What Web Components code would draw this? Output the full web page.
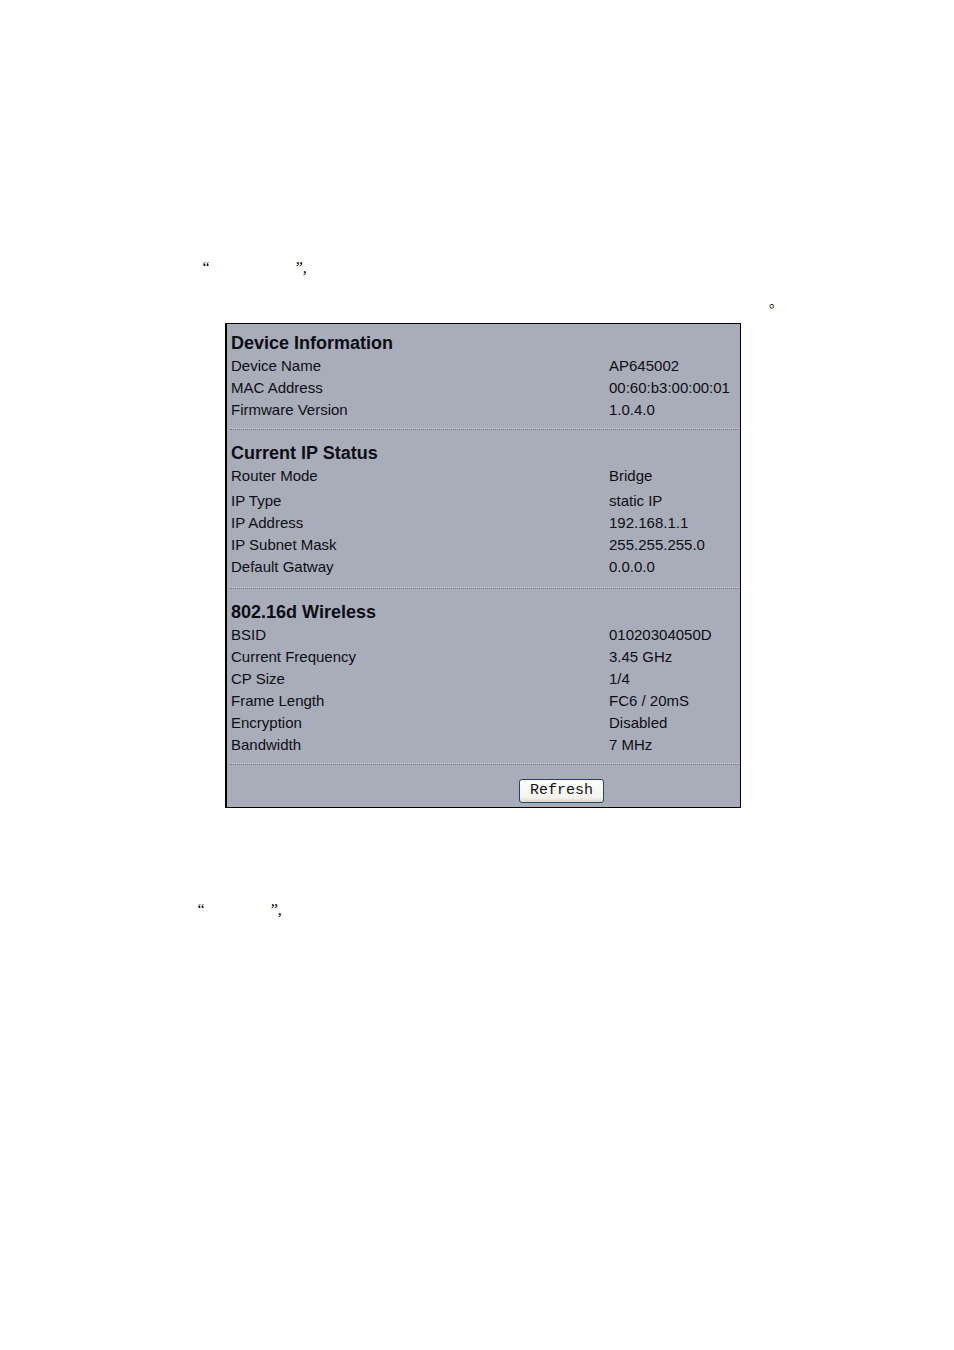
<!DOCTYPE html>
<html lang="en">
<head>
<meta charset="utf-8">
<meta name="viewport" content="width=device-width, initial-scale=1">
<title>Device Information</title>
<style>
  body {
    margin: 0;
    background: #fff;
    color: #000;
    font-family: "Liberation Sans", Arial, sans-serif;
  }
  main {
    padding: 256px 213px 0 225px;
  }
  .first { --gap: 84px; margin-left: -24px; }
  .second { --gap: 64px; margin: 90px 0 0 -29px; }
</style>
</head>
<body>
<main>
  <quote-line class="first"></quote-line>
  <full-stop></full-stop>
  <status-panel>
    <info-section heading="Device Information">
      <info-row label="Device Name">AP645002</info-row>
      <info-row label="MAC Address">00:60:b3:00:00:01</info-row>
      <info-row label="Firmware Version">1.0.4.0</info-row>
    </info-section>
    <info-section heading="Current IP Status" class="roomy">
      <info-row label="Router Mode" class="apart">Bridge</info-row>
      <info-row label="IP Type">static IP</info-row>
      <info-row label="IP Address">192.168.1.1</info-row>
      <info-row label="IP Subnet Mask">255.255.255.0</info-row>
      <info-row label="Default Gatway">0.0.0.0</info-row>
    </info-section>
    <info-section heading="802.16d Wireless">
      <info-row label="BSID">01020304050D</info-row>
      <info-row label="Current Frequency">3.45 GHz</info-row>
      <info-row label="CP Size">1/4</info-row>
      <info-row label="Frame Length">FC6 / 20mS</info-row>
      <info-row label="Encryption">Disabled</info-row>
      <info-row label="Bandwidth">7 MHz</info-row>
    </info-section>
    <refresh-button slot="action">Refresh</refresh-button>
  </status-panel>
  <quote-line class="second"></quote-line>
</main>

<script>
class QuoteLine extends HTMLElement {
  constructor() {
    super();
    this.attachShadow({ mode: "open" });
    this.shadowRoot.innerHTML = `
    <style>
    :host {
      display: flex;
      gap: var(--gap);
      font: italic 16px/24px "Liberation Serif", "Times New Roman", serif;
    }
    </style>
    <span>“</span>
    <span>”,</span>
    `;
  }
}
customElements.define("quote-line", QuoteLine);

class FullStop extends HTMLElement {
  constructor() {
    super();
    this.attachShadow({ mode: "open" });
    this.shadowRoot.innerHTML = `
    <style>
    :host {
      display: block;
      margin: 11px -42px 8px 0;
      text-align: right;
      font: 14px/24px "Liberation Serif", "Noto Sans CJK SC", serif;
    }
    </style>
    <span lang="zh-CN">。</span>
    `;
  }
}
customElements.define("full-stop", FullStop);

class StatusPanel extends HTMLElement {
  constructor() {
    super();
    this.attachShadow({ mode: "open" });
    this.shadowRoot.innerHTML = `
    <style>
    :host {
      display: block;
      --value-width: 131px;
      padding: 7px 0 4px 3px;
      border: 1px solid #000;
      border-left-width: 2px;
      background: #a9adba;
      color: #0c0d14;
    }
    footer {
      display: grid;
      grid-template-columns: 1fr var(--value-width);
      justify-items: end;
      padding-top: 3px;
    }
    </style>
    <slot></slot>
    <footer><slot name="action"></slot></footer>
    `;
  }
}
customElements.define("status-panel", StatusPanel);

// one label and its value, laid out by the section's table
class InfoRow extends HTMLElement {
  constructor() {
    super();
    this.attachShadow({ mode: "open" });
    this.shadowRoot.innerHTML = `
    <style>
    :host { display: block; }
    </style>
    <slot></slot>
    `;
  }
}
customElements.define("info-row", InfoRow);

class InfoSection extends HTMLElement {
  constructor() {
    super();
    this.attachShadow({ mode: "open" });
    this.shadowRoot.innerHTML = `
    <style>
    :host {
      display: block;
      padding-bottom: 8px;
      border-bottom: 1px dotted #6c6f7c;
      box-shadow: inset 0 -1px #bcbfca;
      margin-bottom: 11px;
    }
    :host(.roomy) { padding-bottom: 10px; }
    h2 {
      margin: 0;
      padding-left: 1px;
      font-size: 18px;
      line-height: 24px;
    }
    table {
      width: 100%;
      table-layout: fixed;
      border-collapse: collapse;
      font-size: 15px;
      line-height: 22px;
    }
    th, td {
      padding: 0;
      text-align: left;
      font-weight: normal;
      white-space: nowrap;
    }
    th { padding-left: 1px; }
    td { width: var(--value-width); }
    .apart > * { padding-bottom: 3px; }
    </style>
    <h2 id="heading"></h2>
    <table aria-labelledby="heading"><tbody></tbody></table>
    `;
  }
  connectedCallback() {
    this.shadowRoot.querySelector("h2").textContent = this.getAttribute("heading");
    const body = this.shadowRoot.querySelector("tbody");
    body.innerHTML = "";
    this.querySelectorAll("info-row").forEach((row, i) => {
      const tr = document.createElement("tr");
      const th = document.createElement("th");
      const td = document.createElement("td");
      const slot = document.createElement("slot");
      tr.className = row.className;
      th.scope = "row";
      th.textContent = row.getAttribute("label");
      slot.name = row.slot = "value-" + i;
      td.append(slot);
      tr.append(th, td);
      body.append(tr);
    });
  }
}
customElements.define("info-section", InfoSection);

class RefreshButton extends HTMLElement {
  constructor() {
    super();
    this.attachShadow({ mode: "open" });
    this.shadowRoot.innerHTML = `
    <style>
    :host {
      display: block;
      margin-right: 5px;
    }
    button {
      display: block;
      height: 24px;
      padding: 0 10px;
      border: 1px solid #24476c;
      border-radius: 3px;
      background: linear-gradient(#fff, #f4f3ee 80%, #d9d5ca);
      color: #111;
      font: 15px/20px "Liberation Mono", "Courier New", monospace;
    }
    </style>
    <button type="button"><slot></slot></button>
    `;
  }
}
customElements.define("refresh-button", RefreshButton);
</script>
</body>
</html>
